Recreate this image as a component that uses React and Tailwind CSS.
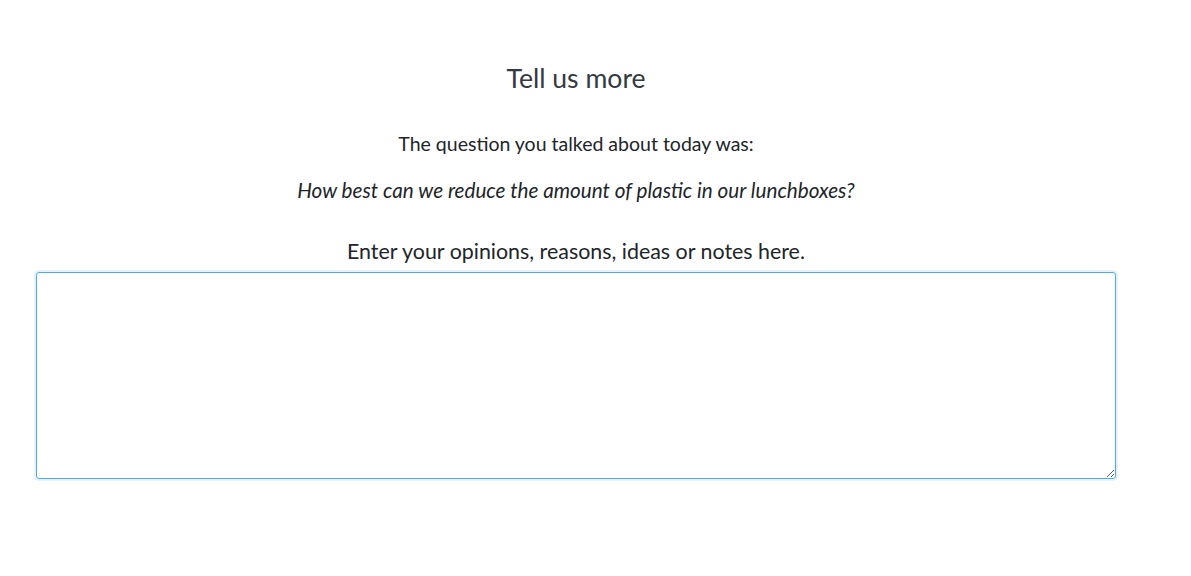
export default function App() {
  return (
    <div className="min-h-[576px] bg-white text-[#343a40]">
      <div className="ml-[36px] w-[1080px] pt-[59px] font-['Lato',sans-serif] text-center">
        <h2 className="text-[26.6px] leading-[38px] text-[#343a40]">Tell us more</h2>
        <p className="mt-[33px] text-[19.5px] leading-[28px] text-[#212529]">The question you talked about today was:</p>
        <p className="mt-[18px] text-[20.7px] leading-[28px] italic text-[#212529]">How best can we reduce the amount of plastic in our lunchboxes?</p>
        <label className="block mt-[31px] text-[21.4px] leading-[32px] text-[#212529]">Enter your opinions, reasons, ideas or notes here.</label>
        <textarea className="block mt-[5px] w-[1080px] h-[207px] rounded-[3px] border border-[#52a8ec] shadow-[0_0_0_2px_rgba(82,168,236,0.15)] outline-none resize-y"></textarea>
      </div>
    </div>
  );
}
